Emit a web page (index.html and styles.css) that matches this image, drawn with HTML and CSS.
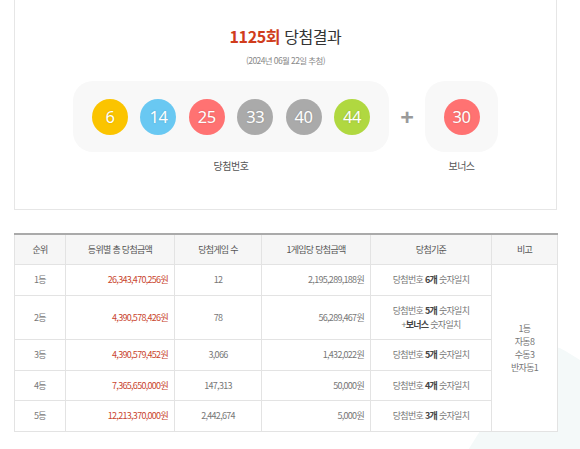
FILE: index.html
```html
<!DOCTYPE html>
<html lang="ko">
<head>
<meta charset="utf-8">
<link rel="stylesheet" href="styles.css">
</head>
<body>
<div class="stage">
<div class="deco"></div>
<div class="page">
  <section class="result">
    <h2 class="title"><strong>1125회</strong> 당첨결과</h2>
    <p class="date">(2024년 06월 22일 추첨)</p>
    <div class="draw">
      <div class="group">
        <div class="panel main">
          <span class="ball yellow">6</span>
          <span class="ball blue">14</span>
          <span class="ball red">25</span>
          <span class="ball gray">33</span>
          <span class="ball gray">40</span>
          <span class="ball green">44</span>
        </div>
        <p class="label">당첨번호</p>
      </div>
      <div class="plus">+</div>
      <div class="group">
        <div class="panel bonus">
          <span class="ball red">30</span>
        </div>
        <p class="label">보너스</p>
      </div>
    </div>
  </section>

  <table class="prize">
    <colgroup>
      <col class="c1"><col class="c2"><col class="c3"><col class="c4"><col class="c5"><col class="c6">
    </colgroup>
    <thead>
      <tr>
        <th>순위</th>
        <th>등위별 총 당첨금액</th>
        <th>당첨게임 수</th>
        <th>1게임당 당첨금액</th>
        <th>당첨기준</th>
        <th>비고</th>
      </tr>
    </thead>
    <tbody>
      <tr class="r1">
        <td>1등</td>
        <td class="amt red">26,343,470,256원</td>
        <td>12</td>
        <td class="amt">2,195,289,188원</td>
        <td>당첨번호 <b>6개</b> 숫자일치</td>
        <td rowspan="5" class="note">1등<br>자동8<br>수동3<br>반자동1</td>
      </tr>
      <tr class="r2">
        <td>2등</td>
        <td class="amt red">4,390,578,426원</td>
        <td>78</td>
        <td class="amt">56,289,467원</td>
        <td class="two">당첨번호 <b>5개</b> 숫자일치<br>+<b>보너스</b> 숫자일치</td>
      </tr>
      <tr class="r3">
        <td>3등</td>
        <td class="amt red">4,390,579,452원</td>
        <td>3,066</td>
        <td class="amt">1,432,022원</td>
        <td>당첨번호 <b>5개</b> 숫자일치</td>
      </tr>
      <tr class="r4">
        <td>4등</td>
        <td class="amt red">7,365,650,000원</td>
        <td>147,313</td>
        <td class="amt">50,000원</td>
        <td>당첨번호 <b>4개</b> 숫자일치</td>
      </tr>
      <tr class="r5">
        <td>5등</td>
        <td class="amt red">12,213,370,000원</td>
        <td>2,442,674</td>
        <td class="amt">5,000원</td>
        <td>당첨번호 <b>3개</b> 숫자일치</td>
      </tr>
    </tbody>
  </table>
</div>
</div>
</body>
</html>
```

FILE: styles.css
```css
html, body {
  margin: 0;
  padding: 0;
  background: #fff;
  overflow: hidden;
}
body {
  font-family: "Noto Sans CJK KR", "Noto Sans", sans-serif;
  color: #666;
}
.stage {
  position: relative;
  width: 580px;
  height: 449px;
  overflow: hidden;
}
.deco {
  position: absolute;
  left: 540px;
  top: 335px;
  width: 260px;
  height: 260px;
  background: #f4f9f9;
  border-radius: 30px;
  transform: rotate(32deg);
  transform-origin: 0 0;
}
.page {
  position: relative;
  padding-left: 14px;
  width: 543px;
}
.result {
  box-sizing: border-box;
  height: 210px;
  border: 1px solid #e6e6e6;
  border-top: none;
  background: #fff;
  display: flex;
  flex-direction: column;
  align-items: center;
}
.title {
  margin: 25px 0 0;
  font-size: 16px;
  line-height: 22px;
  font-weight: 400;
  color: #333;
  letter-spacing: -0.4px;
}
.title strong {
  color: #d03c1c;
  font-weight: 700;
}
.date {
  margin: 7px 0 0;
  font-size: 8.5px;
  line-height: 12px;
  color: #888;
  letter-spacing: -0.6px;
}
.draw {
  margin-top: 15px;
  display: flex;
  align-items: flex-start;
}
.group {
  display: flex;
  flex-direction: column;
  align-items: center;
}
.panel {
  height: 71px;
  background: #f8f8f8;
  border-radius: 20px;
  display: flex;
  align-items: center;
  box-sizing: border-box;
}
.panel.main {
  width: 316px;
  padding: 0 19px;
  gap: 12.4px;
}
.panel.bonus {
  width: 73px;
  justify-content: center;
}
.ball {
  width: 36px;
  height: 36px;
  border-radius: 50%;
  display: flex;
  align-items: center;
  justify-content: center;
  color: #fff;
  font-family: "Noto Sans", sans-serif;
  font-size: 16.5px;
  font-weight: 400;
  letter-spacing: -0.5px;
  text-shadow: 0 0 2px rgba(0,0,0,0.18);
}
.yellow { background: #fbc400; }
.blue { background: #69c8f2; }
.red { background: #ff7272; }
.gray { background: #aaaaaa; }
.green { background: #b0d840; }
.plus {
  width: 36px;
  height: 71px;
  display: flex;
  align-items: center;
  justify-content: center;
  font-family: "Noto Sans", sans-serif;
  font-size: 24px;
  font-weight: 700;
  color: #9a9a9a;
}
.label {
  margin: 7px 0 0;
  font-size: 10px;
  line-height: 14px;
  color: #555;
  letter-spacing: -0.5px;
}
.prize {
  margin-top: 23px;
  width: 543px;
  border-collapse: collapse;
  table-layout: fixed;
  font-size: 9px;
  letter-spacing: -0.7px;
  color: #777;
  background: #fff;
}
.c1 { width: 51px; }
.c2 { width: 109px; }
.c3 { width: 87px; }
.c4 { width: 109px; }
.c5 { width: 121px; }
.c6 { width: 66px; }
.prize th, .prize td {
  border: 1px solid #e3e3e3;
  padding: 0;
  text-align: center;
  vertical-align: middle;
  line-height: 14px;
}
.prize thead th {
  border-top: 2px solid #aaa;
  background: #f6f6f6;
  font-weight: 400;
  color: #555;
  height: 29px;
}
.prize td { height: 30px; }
.prize tr.r2 td { height: 43px; }
.prize tr.r4 td { height: 29px; }
.prize td.amt {
  text-align: right;
  padding-right: 6px;
}
.prize td.amt.red {
  background: none;
  color: #c9452e;
}
.prize td b {
  color: #444;
  font-weight: 700;
}
.prize td.note {
  line-height: 13px;
  color: #777;
}
```
